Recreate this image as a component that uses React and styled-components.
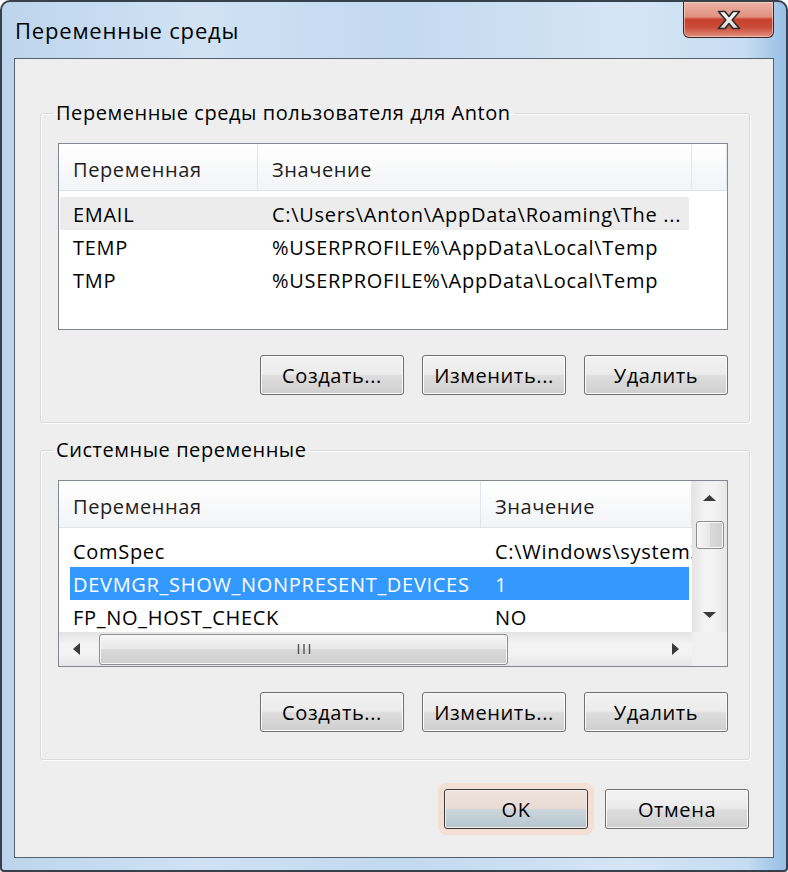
import React from 'react';
import styled, { createGlobalStyle } from 'styled-components';

const GlobalStyle = createGlobalStyle`
  html, body {
    margin: 0;
    padding: 0;
    background: #ffffff;
  }
  body {
    font-family: "Open Sans", "Noto Sans", sans-serif;
  }
  * {
    box-sizing: border-box;
  }
`;

const userVars = [
  { name: 'EMAIL', value: 'C:\\Users\\Anton\\AppData\\Roaming\\The ...', muted: true },
  { name: 'TEMP', value: '%USERPROFILE%\\AppData\\Local\\Temp' },
  { name: 'TMP', value: '%USERPROFILE%\\AppData\\Local\\Temp' }
];

const systemVars = [
  { name: 'ComSpec', value: 'C:\\Windows\\system32\\cmd.exe' },
  { name: 'DEVMGR_SHOW_NONPRESENT_DEVICES', value: '1', selected: true },
  { name: 'FP_NO_HOST_CHECK', value: 'NO' }
];

const Arrow = ({ dir }) => {
  const shapes = {
    up: '0,6 6.5,0 13,6',
    down: '0,0 13,0 6.5,6',
    left: '7,0 7,12 0,6',
    right: '0,0 7,6 0,12'
  };
  const vertical = dir === 'up' || dir === 'down';
  return (
    <svg width={vertical ? 13 : 7} height={vertical ? 6 : 12} viewBox={vertical ? '0 0 13 6' : '0 0 7 12'}>
      <polygon points={shapes[dir]} fill="#3a3a3a" />
    </svg>
  );
};

const Grip = () => (
  <svg width="14" height="10" viewBox="0 0 14 10">
    <path d="M1.5 0v10M7 0v10M12.5 0v10" stroke="#555" strokeWidth="1.4" />
  </svg>
);

const CloseGlyph = () => (
  <svg width="24" height="20" viewBox="0 0 24 20">
    <defs>
      <linearGradient id="xg" x1="0" y1="0" x2="0" y2="1">
        <stop offset="0" stopColor="#ffffff" />
        <stop offset="1" stopColor="#d9d9d9" />
      </linearGradient>
    </defs>
    <path
      d="M1.5 1.5H8L12 6.5L16 1.5H22.5L15.2 10L22.5 18.5H16L12 13.5L8 18.5H1.5L8.8 10Z"
      fill="url(#xg)"
      stroke="#2e2a2a"
      strokeWidth="1.6"
      strokeLinejoin="round"
    />
  </svg>
);

const ListRows = ({ rows, col }) => (
  <Rows>
    {rows.map((r) => (
      <Row key={r.name} $col={col} $muted={r.muted} $selected={r.selected}>
        <Cell>{r.name}</Cell>
        <Cell>{r.value}</Cell>
      </Row>
    ))}
  </Rows>
);

const ButtonBar = () => (
  <Actions>
    <Button>Создать...</Button>
    <Button>Изменить...</Button>
    <Button>Удалить</Button>
  </Actions>
);

export default function App() {
  return (
    <>
      <GlobalStyle />
      <Window>
        <TitleBar>
          <Title>Переменные среды</Title>
          <CloseButton><CloseGlyph /></CloseButton>
        </TitleBar>
        <Client>
          <Group $first>
            <Legend>Переменные среды пользователя для Anton</Legend>
            <ListFrame>
              <Header $cols="199px 434px 1fr">
                <HeaderCell>Переменная</HeaderCell>
                <HeaderCell>Значение</HeaderCell>
                <HeaderCell />
              </Header>
              <ListRows rows={userVars} col="199px" />
            </ListFrame>
            <ButtonBar />
          </Group>

          <Group>
            <Legend>Системные переменные</Legend>
            <ListFrame $scroll>
              <Body>
                <Header $cols="422px 1fr">
                  <HeaderCell>Переменная</HeaderCell>
                  <HeaderCell>Значение</HeaderCell>
                </Header>
                <ListRows rows={systemVars} col="422px" />
              </Body>
              <VScroll>
                <ArrowBox $v><Arrow dir="up" /></ArrowBox>
                <VThumb />
                <Spacer />
                <ArrowBox $v><Arrow dir="down" /></ArrowBox>
              </VScroll>
              <HScroll>
                <ArrowBox><Arrow dir="left" /></ArrowBox>
                <HThumb><Grip /></HThumb>
                <Spacer />
                <ArrowBox><Arrow dir="right" /></ArrowBox>
              </HScroll>
              <Corner />
            </ListFrame>
            <ButtonBar />
          </Group>

          <Footer>
            <Button $primary>OK</Button>
            <Button>Отмена</Button>
          </Footer>
        </Client>
      </Window>
    </>
  );
}

const Window = styled.div`
  width: 788px;
  height: 872px;
  display: flex;
  flex-direction: column;
  border: 2px solid #36414c;
  border-radius: 10px 10px 4px 4px;
  overflow: hidden;
  background: linear-gradient(to right, #bdd5ec 0%, #d0e2f4 25%, #c3d9ef 50%, #d4e5f5 80%, #c6dcf1 95%, #97bfe6 100%);
`;

const TitleBar = styled.div`
  height: 56px;
  flex-shrink: 0;
  display: flex;
  align-items: flex-start;
  justify-content: space-between;
  padding-left: 13px;
`;

const Title = styled.div`
  margin-top: 14px;
  font-size: 22px;
  line-height: 28px;
  letter-spacing: 0.8px;
  color: #000;
`;

const CloseButton = styled.div`
  width: 91px;
  height: 36px;
  margin-right: 12px;
  display: flex;
  align-items: center;
  justify-content: center;
  border: 1px solid #3a2626;
  border-top: none;
  border-radius: 0 0 6px 6px;
  background: linear-gradient(#ecb4a6 0%, #e0917f 42%, #c8412f 50%, #c94a38 72%, #e3907e 100%);
  box-shadow: inset 0 0 0 1px rgba(255, 220, 210, 0.6);
`;

const Client = styled.div`
  flex: 1;
  margin: 0 12px 12px;
  border: 1px solid #56616c;
  background: #eeeeee;
  padding: 0 23px 0 25px;
  display: flex;
  flex-direction: column;
`;

const Group = styled.fieldset`
  margin: ${(p) => (p.$first ? '42px' : '15px')} 0 0;
  padding: 18px 21px 27px 17px;
  min-width: 0;
  border: 1px solid #d9dcdf;
  border-radius: 3px;
  box-shadow: inset 1px 1px 0 #fbfbfb, 1px 1px 0 #fbfbfb;
`;

const Legend = styled.legend`
  margin-left: -5px;
  padding: 0 3px;
  font-size: 20px;
  line-height: 24px;
  letter-spacing: 0.55px;
  color: #000;
`;

const ListFrame = styled.div`
  height: 187px;
  border: 1px solid #828790;
  background: #ffffff;
  display: ${(p) => (p.$scroll ? 'grid' : 'block')};
  grid-template-columns: 1fr 35px;
  grid-template-rows: 1fr 34px;
  overflow: hidden;
`;

const Body = styled.div`
  overflow: hidden;
`;

const Header = styled.div`
  display: grid;
  grid-template-columns: ${(p) => p.$cols};
  height: 47px;
  border-bottom: 1px solid #e1e4e8;
  background: linear-gradient(#ffffff, #f3f4f6);
`;

const HeaderCell = styled.div`
  display: flex;
  align-items: center;
  padding: 5px 0 0 14px;
  border-right: 1px solid #e2e5e9;
  font-size: 20px;
  letter-spacing: 0.6px;
  color: #1e1e1e;
  white-space: nowrap;
  overflow: hidden;
`;

const Rows = styled.div`
  padding-top: 6px;
`;

const Row = styled.div`
  display: grid;
  grid-template-columns: ${(p) => p.$col} 1fr;
  align-items: center;
  height: 33px;
  padding-top: 2px;
  margin-right: ${(p) => (p.$muted ? '38px' : p.$selected ? '3px' : '0')};
  color: ${(p) => (p.$selected ? '#ffffff' : '#000000')};
  background: ${(p) =>
    p.$selected
      ? 'linear-gradient(to right, transparent 11px, #3399ff 11px)'
      : p.$muted
        ? 'linear-gradient(to right, transparent 1px, #ececec 1px)'
        : 'transparent'};
`;

const Cell = styled.div`
  padding-left: 14px;
  font-size: 20px;
  letter-spacing: 0.7px;
  white-space: nowrap;
  overflow: hidden;
`;

const VScroll = styled.div`
  display: flex;
  flex-direction: column;
  align-items: center;
  background: linear-gradient(to right, #e4e4e4, #f3f3f3 35%, #f3f3f3 65%, #e6e6e6);
`;

const HScroll = styled.div`
  display: flex;
  align-items: center;
  background: linear-gradient(#e4e4e4, #f3f3f3 35%, #f3f3f3 65%, #e6e6e6);
`;

const ArrowBox = styled.div`
  flex-shrink: 0;
  display: flex;
  align-items: center;
  justify-content: center;
  width: ${(p) => (p.$v ? '100%' : '34px')};
  height: ${(p) => (p.$v ? '34px' : '100%')};
`;

const VThumb = styled.div`
  width: 28px;
  height: 28px;
  margin-top: 6px;
  border: 1px solid #8e8e8e;
  border-radius: 3px;
  background: linear-gradient(to right, #f5f5f5, #e7e7e7 50%, #d9d9d9 50%, #cfcfcf);
  box-shadow: inset 0 0 0 1px #fafafa;
`;

const HThumb = styled.div`
  width: 409px;
  height: 31px;
  margin-left: 6px;
  display: flex;
  align-items: center;
  justify-content: center;
  border: 1px solid #8e8e8e;
  border-radius: 3px;
  background: linear-gradient(#f5f5f5, #e7e7e7 50%, #d9d9d9 50%, #cfcfcf);
  box-shadow: inset 0 0 0 1px #fafafa;
`;

const Spacer = styled.div`
  flex: 1;
`;

const Corner = styled.div`
  background: #f0f0f0;
`;

const Actions = styled.div`
  display: flex;
  justify-content: flex-end;
  gap: 18px;
  margin-top: 25px;
`;

const Footer = styled.div`
  display: flex;
  justify-content: flex-end;
  gap: 17px;
  margin-top: 29px;
  padding-right: 1px;
`;

const Button = styled.button`
  width: 144px;
  height: 40px;
  padding: 0;
  border: 1px solid ${(p) => (p.$primary ? '#3a3a3a' : '#707070')};
  border-radius: 3px;
  font-family: inherit;
  font-size: 20px;
  letter-spacing: 0.6px;
  color: #000;
  background: ${(p) =>
    p.$primary
      ? 'linear-gradient(#f0e4de 0%, #e8dbd5 48%, #ccd5db 52%, #b5c6d2 100%)'
      : 'linear-gradient(#f3f3f3 0%, #ebebeb 48%, #dddddd 52%, #cfcfcf 100%)'};
  box-shadow: ${(p) =>
    p.$primary
      ? 'inset 0 0 0 1px #f7efea, 0 0 0 6px #f3dfd4'
      : 'inset 0 0 0 1px #fbfbfb'};
`;
